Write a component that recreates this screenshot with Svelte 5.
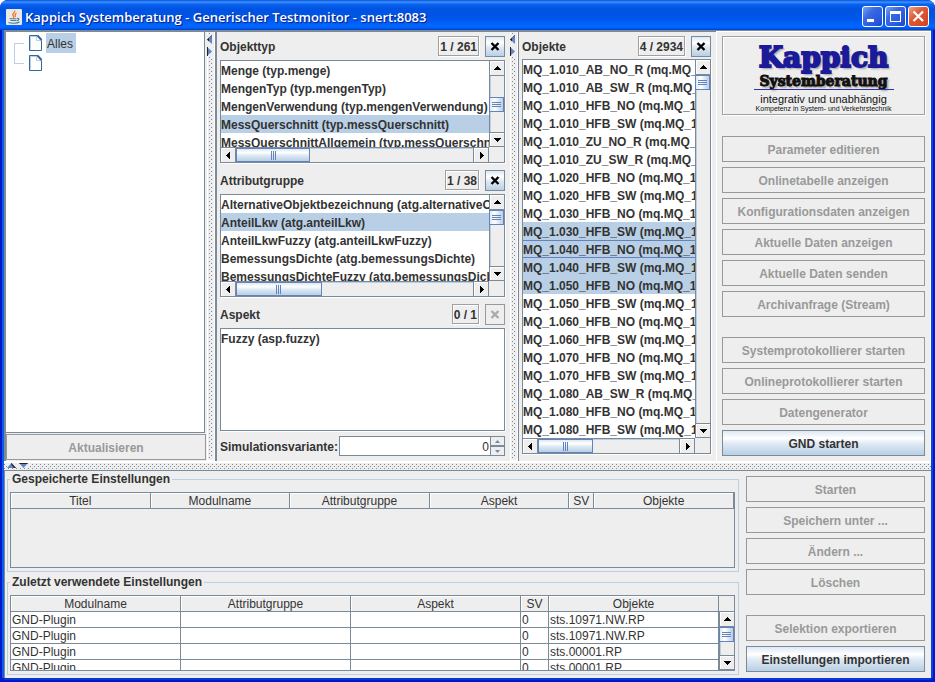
<script>
  const types = [
    'Menge (typ.menge)',
    'MengenTyp (typ.mengenTyp)',
    'MengenVerwendung (typ.mengenVerwendung)',
    'MessQuerschnitt (typ.messQuerschnitt)',
    'MessQuerschnittAllgemein (typ.messQuerschn'
  ];
  const groups = [
    'AlternativeObjektbezeichnung (atg.alternativeO',
    'AnteilLkw (atg.anteilLkw)',
    'AnteilLkwFuzzy (atg.anteilLkwFuzzy)',
    'BemessungsDichte (atg.bemessungsDichte)',
    'BemessungsDichteFuzzy (atg.bemessungsDich'
  ];
  const objects = [
    '1.010_AB_NO_R (mq.MQ_', '1.010_AB_SW_R (mq.MQ_', '1.010_HFB_NO (mq.MQ_1', '1.010_HFB_SW (mq.MQ_1',
    '1.010_ZU_NO_R (mq.MQ_', '1.010_ZU_SW_R (mq.MQ_', '1.020_HFB_NO (mq.MQ_1', '1.020_HFB_SW (mq.MQ_1',
    '1.030_HFB_NO (mq.MQ_1', '1.030_HFB_SW (mq.MQ_1', '1.040_HFB_NO (mq.MQ_1', '1.040_HFB_SW (mq.MQ_1',
    '1.050_HFB_NO (mq.MQ_1', '1.050_HFB_SW (mq.MQ_1', '1.060_HFB_NO (mq.MQ_1', '1.060_HFB_SW (mq.MQ_1',
    '1.070_HFB_NO (mq.MQ_1', '1.070_HFB_SW (mq.MQ_1', '1.080_AB_SW_R (mq.MQ_', '1.080_HFB_NO (mq.MQ_1',
    '1.080_HFB_SW (mq.MQ_1'
  ].map((n) => `MQ_${n}`);

  const tools = [
    'Parameter editieren', 'Onlinetabelle anzeigen', 'Konfigurationsdaten anzeigen',
    'Aktuelle Daten anzeigen', 'Aktuelle Daten senden', 'Archivanfrage (Stream)'
  ];
  const services = ['Systemprotokollierer starten', 'Onlineprotokollierer starten', 'Datengenerator'];
  const presetActions = ['Starten', 'Speichern unter ...', 'Ändern ...', 'Löschen'];
  const savedColumns = ['Titel', 'Modulname', 'Attributgruppe', 'Aspekt', 'SV', 'Objekte'];
  const recentColumns = savedColumns.slice(1);
  const recent = ['sts.10971.NW.RP', 'sts.10971.NW.RP', 'sts.00001.RP', 'sts.00001.RP'];

  let variant = $state('0');
  const step = (n) => (variant = String(Math.max(0, Number(variant) + n)));
</script>

{#snippet page()}
  <svg class="page" width="14" height="17" viewBox="0 0 14 17" aria-hidden="true">
    <path d="M.5.5H8.5L12.5 5V15.5H.5Z" fill="#fff" stroke="#336699" />
    <path d="M1.5 14.5V1.5H7.5" fill="none" stroke="#b8cfe5" />
    <path d="M7.5 1V5.5H12.5" fill="none" stroke="#b8cfe5" />
    <path d="M8.5.5L12.5 5" stroke="#336699" stroke-width="2" />
  </svg>
{/snippet}

{#snippet arrow(dir)}
  <svg width="9" height="9" viewBox="0 0 9 9" aria-hidden="true" shape-rendering="crispEdges">
    {#if dir === 'up'}<path d="M4 2h1v1h1v1h1v1h1v1H1V5h1V4h1V3h1z" />
    {:else if dir === 'down'}<path d="M1 3h7v1H7v1H6v1H5v1H4V6H3V5H2V4H1z" />
    {:else if dir === 'left'}<path d="M6 1v7H5V7H4V6H3V5H2V4h1V3h1V2h1V1z" />
    {:else}<path d="M3 1v7h1V7h1V6h1V5h1V4H6V3H5V2H4V1z" />{/if}
  </svg>
{/snippet}

{#snippet bar(axis, before, size, after)}
  <div class="bar {axis}">
    <button class="step" aria-label="Zurück">{@render arrow(axis === 'v' ? 'up' : 'left')}</button>
    <div class="track">
      <span style="flex-grow:{before}"></span>
      <span class="thumb" style="flex-grow:{size}"><i></i></span>
      <span style="flex-grow:{after}"></span>
    </div>
    <button class="step" aria-label="Weiter">{@render arrow(axis === 'v' ? 'down' : 'right')}</button>
  </div>
{/snippet}

{#snippet head(title, count, active)}
  <header class="head">
    <h2>{title}</h2>
    <output>{count}</output>
    <button class="clear" aria-label="Auswahl {title} aufheben" disabled={!active}>
      <svg width="10" height="9" viewBox="0 0 10 9" aria-hidden="true"><path d="M1.5 1L8.5 8M8.5 1L1.5 8" stroke="currentColor" stroke-width="2.4" /></svg>
    </button>
  </header>
{/snippet}

{#snippet options(label, items, from, to, focus)}
  <div class="options" role="listbox" tabindex="0" aria-label={label}>
    {#each items as item, i}
      <div class="option" class:focus={i === focus} role="option" tabindex="-1" aria-selected={i >= from && i <= to}>{item}</div>
    {/each}
  </div>
{/snippet}

{#snippet splitter()}
  <div class="splitter">
    <svg width="5" height="21" viewBox="0 0 5 21" aria-hidden="true">
      <path d="M5 0V9L0 4.500Z" fill="#6382bf" /><path d="M5 0L0 4.500L2 6.500V3L5 .8Z" fill="#222" />
      <path d="M0 12V21L5 16.500Z" fill="#6382bf" /><path d="M0 12h1v9H0z" fill="#222" />
    </svg>
  </div>
{/snippet}

{#snippet columns(names)}
  <thead><tr>{#each names as name}<th scope="col" class:sv={name === 'SV'}>{name}</th>{/each}</tr></thead>
{/snippet}

<div class="window">
  <div class="titlebar">
    <svg width="16" height="16" viewBox="0 0 16 16" aria-hidden="true">
      <rect width="16" height="16" rx="1" fill="#e9e9e6" />
      <path d="M8.500 1.500C10 3.500 5.500 4.500 7 6.500S8 8 7.500 8.800M10.500 4C8.500 5 9.500 6 9.200 7.800" fill="none" stroke="#e8772e" stroke-width="1.300" />
      <path d="M3.500 9.700H10.500M4.500 11.500H10M11 9.500C13.500 8.500 13.500 11.500 10.500 11.700M2.500 13.500C5 14.600 11 14.600 13.500 13" fill="none" stroke="#4e7896" stroke-width="1.100" />
    </svg>
    <h1>Kappich Systemberatung - Generischer Testmonitor - snert:8083</h1>
    <button class="sys" aria-label="Minimieren"><svg width="19" height="19" viewBox="0 0 19 19"><path d="M4 12h7v3H4z" fill="#fff" /></svg></button>
    <button class="sys" aria-label="Maximieren"><svg width="19" height="19" viewBox="0 0 19 19"><path d="M4 4h11v11H4zM5 7v7h9V7z" fill="#fff" fill-rule="evenodd" /></svg></button>
    <button class="sys close" aria-label="Schließen"><svg width="19" height="19" viewBox="0 0 19 19"><path d="M4.500 4.500L14 14M14 4.500L4.500 14" stroke="#fff" stroke-width="2.200" /></svg></button>
  </div>

  <main>
    <div class="upper">
      <section class="left">
        <div class="tree">
          <span class="branch"></span>
          <ul>
            <li>{@render page()}<span class="node">Alles</span></li>
            <li>{@render page()}</li>
          </ul>
        </div>
        <button class="btn" disabled>Aktualisieren</button>
      </section>

      {@render splitter()}

      <section class="filters">
        {@render head('Objekttyp', '1 / 261', true)}
        <div class="pane">
          {@render options('Objekttyp', types, 3, 3, -1)}
          {@render bar('v', 20, 0, 20)}
          {@render bar('h', 0, 73, 165)}
        </div>
        {@render head('Attributgruppe', '1 / 38', true)}
        <div class="pane">
          {@render options('Attributgruppe', groups, 1, 1, -1)}
          {@render bar('v', 0, 0, 1)}
          {@render bar('h', 0, 85, 153)}
        </div>
        {@render head('Aspekt', '0 / 1', false)}
        <div class="pane plain">
          {@render options('Aspekt', ['Fuzzy (asp.fuzzy)'], -1, -1, -1)}
        </div>
        <div class="variant">
          <label for="variant">Simulationsvariante:</label>
          <input id="variant" type="text" inputmode="numeric" bind:value={variant} />
          <div class="spin">
            <button aria-label="Erhöhen" onclick={() => step(1)}><svg width="5" height="3" viewBox="0 0 5 3"><path d="M2.500 0L5 3H0z" /></svg></button>
            <button aria-label="Verringern" onclick={() => step(-1)}><svg width="5" height="3" viewBox="0 0 5 3"><path d="M2.500 3L5 0H0z" /></svg></button>
          </div>
        </div>
      </section>

      {@render splitter()}

      <section class="objects">
        {@render head('Objekte', '4 / 2934', true)}
        <div class="pane">
          {@render options('Objekte', objects, 9, 12, 10)}
          {@render bar('v', 0, 0, 1)}
          {@render bar('h', 0, 54, 88)}
        </div>
      </section>

      <aside>
        <div class="logo">
          <strong>Kappich</strong>
          <b>Systemberatung</b>
          <hr />
          <span>integrativ und unabhängig</span>
          <small>Kompetenz in System- und Verkehrstechnik</small>
        </div>
        <div class="stack">
          {#each tools as name}<button class="btn" disabled>{name}</button>{/each}
        </div>
        <div class="stack">
          {#each services as name}<button class="btn" disabled>{name}</button>{/each}
          <button class="btn">GND starten</button>
        </div>
      </aside>
    </div>

    <div class="divider">
      <svg width="22" height="5" viewBox="0 0 22 5" aria-hidden="true">
        <path d="M4.500 0L9 5H0Z" fill="#6382bf" /><path d="M4.500 0L9 5H7L4 1Z" fill="#222" />
        <path d="M12 0H21L16.500 5Z" fill="#6382bf" /><path d="M12 0H21L20 1H13Z" fill="#222" />
      </svg>
    </div>

    <div class="lower">
      <div class="presets">
        <fieldset>
          <legend>Gespeicherte Einstellungen</legend>
          <div class="grid">
            <table class="saved">{@render columns(savedColumns)}</table>
          </div>
        </fieldset>
        <fieldset>
          <legend>Zuletzt verwendete Einstellungen</legend>
          <div class="grid">
            <table>
              {@render columns(recentColumns)}
              <tbody>
                {#each recent as name}
                  <tr><td>GND-Plugin</td><td></td><td></td><td>0</td><td>{name}</td></tr>
                {/each}
              </tbody>
            </table>
            <div class="side">
              {@render bar('v', 0, 0, 1)}
            </div>
          </div>
        </fieldset>
      </div>
      <div class="actions">
        <div class="stack">
          {#each presetActions as name}<button class="btn" disabled>{name}</button>{/each}
        </div>
        <div class="stack">
          <button class="btn" disabled>Selektion exportieren</button>
          <button class="btn">Einstellungen importieren</button>
        </div>
      </div>
    </div>
  </main>
</div>

<style>
  :global(body) { background: #fff; }
  * { box-sizing: border-box; }
  h1, h2, ul, fieldset, legend, hr { margin: 0; padding: 0; font: inherit; }
  button, input { font: inherit; color: inherit; padding: 0; margin: 0; border-radius: 0; }
  svg { display: block; flex: none; }

  .window {
    --line: #7a8a99;
    --light: #b8cfe5;
    --blue: #6382bf;
    --face: linear-gradient(#dde8f3 0%, #fff 30%, #dde8f3 55%, #b8cfe5 100%);
    display: flex;
    flex-direction: column;
    height: 100vh;
    min-height: 560px;
    font: bold 12px/18px "Liberation Sans", Arial, sans-serif;
    color: #333;
    border-radius: 8px 8px 0 0;
    overflow: hidden;
    background: #0019cf;
  }
  .titlebar {
    display: flex;
    align-items: center;
    gap: 2px;
    height: 30px;
    flex: none;
    padding: 3px 6px 0 6px;
    background: linear-gradient(#0a4fd8 0%, #3b92ff 7%, #0a62f0 14%, #0053e1 30%, #0055e8 60%, #0066ff 85%, #0062fb 92%, #0040c8 100%);
  }
  h1 {
    flex: 1;
    min-width: 0;
    white-space: nowrap;
    overflow: hidden;
    padding-left: 1px;
    font: 600 13px/18px "Open Sans", "Noto Sans", sans-serif;
    color: #fff;
    text-shadow: 1px 1px 1px #0a1883;
    -webkit-text-stroke: 0;
  }
  .sys {
    width: 21px;
    height: 21px;
    border: 1px solid #fff;
    border-radius: 3px;
    background: linear-gradient(135deg, #7ea2f4, #3a69e3 35%, #2a5be0 70%, #1a48c4);
  }
  .close { background: linear-gradient(135deg, #f0a08a, #e05a35 40%, #d1421c); }

  main {
    flex: 1;
    min-height: 0;
    display: flex;
    flex-direction: column;
    background: #eee;
    margin: 0 4px 4px;
    box-shadow: -2px 0 0 #0c5ce4, 2px 0 0 #0a45d8, 0 2px 0 #0838d0;
  }
  .upper {
    flex: 1;
    min-height: 0;
    display: grid;
    grid-template-columns: minmax(0, 201fr) 8px minmax(0, 295fr) 8px minmax(0, 198fr) 215px;
    grid-template-rows: minmax(0, 1fr);
    border-top: 2px solid var(--line);
    border-left: 2px solid var(--line);
  }
  .left { display: flex; flex-direction: column; gap: 1px; padding: 0 1px 1px 0; }
  .tree {
    flex: 1;
    min-height: 0;
    display: flex;
    margin-right: 1px;
    padding: 1px 0 0 8px;
    background: #fff;
    border-right: 1px solid var(--line);
    border-bottom: 1px solid var(--line);
    font-weight: normal;
  }
  .branch { width: 10px; height: 21px; margin: 10px 5px 0 0; border: 1px solid var(--light); border-right: 0; }
  ul { list-style: none; }
  li { display: flex; align-items: center; gap: 3px; height: 20px; }
  .node { padding: 2px 3px 0 1px; background: var(--light); }

  .btn {
    display: block;
    width: 100%;
    height: 26px;
    flex: none;
    padding-top: 2px;
    border: 1px solid var(--line);
    background: var(--face);
    white-space: nowrap;
  }
  .btn:disabled { border-color: #999; background: none; color: #999; }
  .stack { display: flex; flex-direction: column; gap: 5px; }
  .stack + .stack { margin-top: 20px; }

  .splitter, .divider {
    position: relative;
    border: solid #fff;
    background:
      conic-gradient(from 270deg at 1px 1px, var(--line) 25%, transparent 0) 0 0 / 4px 4px,
      conic-gradient(from 270deg at 1px 1px, var(--line) 25%, transparent 0) 2px 2px / 4px 4px,
      #eee;
    background-origin: content-box;
    background-clip: content-box;
  }
  .splitter { padding: 1px; border-width: 0 1px 1px; }
  .splitter svg { position: absolute; left: -1px; top: 3px; background: #eee; }
  .divider { flex: none; height: 10px; padding: 1px 0; border-width: 2px 0 0; border-bottom: 1px solid var(--line); }
  .divider svg { position: absolute; left: 3px; top: 0; background: #eee; }

  .filters { display: flex; flex-direction: column; padding: 4px 5px 5px 3px; border-left: 2px solid var(--line); }
  .objects { display: flex; flex-direction: column; padding: 4px 5px 7px 3px; border-left: 1px solid var(--line); }
  .head { display: flex; align-items: flex-start; gap: 6px; height: 21px; margin-bottom: 3px; flex: none; }
  .objects .head { margin-bottom: 2px; }
  h2 { flex: 1; line-height: 22px; }
  output {
    height: 20px;
    line-height: 18px;
    padding: 1px 1px 0;
    border: 1px solid #a0a0a0;
    box-shadow: 1px 1px 0 #fff, inset 1px 1px 0 #fff;
    white-space: nowrap;
  }
  .clear {
    display: grid;
    place-items: center;
    width: 20px;
    height: 21px;
    border: 1px solid var(--line);
    background: var(--face);
    color: #000;
  }
  .clear:disabled { border-color: #999; background: none; color: #aaa; }

  .pane {
    flex: 1;
    min-height: 0;
    display: grid;
    grid-template: minmax(0, 1fr) 15px / minmax(0, 1fr) 15px;
    border: 1px solid var(--line);
    box-shadow: 1px 1px 0 #fff;
  }
  .pane.plain { grid-template: minmax(0, 1fr) / minmax(0, 1fr); }
  .filters .pane { margin-bottom: 7px; }
  .filters .plain { margin-bottom: 5px; }
  .options { overflow: hidden; background: #fff; outline: 0; }
  .option { height: 18px; overflow: hidden; white-space: nowrap; border: solid transparent; border-width: 1px 0; line-height: 18px; }
  .option[aria-selected='true'] { background: var(--light); }
  .option.focus { border-color: var(--blue); }

  .bar { display: flex; background: #eee; }
  .bar.v { flex-direction: column; border-left: 1px solid var(--line); }
  .bar.h { border-top: 1px solid var(--line); border-right: 1px solid var(--line); }
  .step { display: grid; place-items: center; flex: 0 0 15px; border: 0; background: #eee; box-shadow: inset 1px 1px 0 #fff; }
  .v .step:last-child { border-top: 1px solid var(--line); border-bottom: 1px solid var(--line); }
  .h .step:last-child { border-left: 1px solid var(--line); }
  .v .step:first-child { border-bottom: 1px solid var(--line); }
  .h .step:first-child { border-right: 1px solid var(--line); }
  .track { flex: 1; min-width: 0; min-height: 0; display: flex; }
  .track span { flex-basis: 0; }
  .v .track { flex-direction: column; box-shadow: inset 1px 0 0 var(--light); }
  .h .track { box-shadow: inset 0 1px 0 var(--light); }
  .track .thumb { display: grid; place-items: center; border: 1px solid var(--blue); background: var(--face); }
  .v .thumb { flex-basis: 15px; margin-left: -1px; background: linear-gradient(90deg, #dde8f3, #fff 35%, #b8cfe5); }
  .thumb i { width: 9px; height: 5px; background: repeating-linear-gradient(var(--blue) 0 1px, transparent 1px 2px); }
  .h .thumb i { width: 5px; height: 9px; background: repeating-linear-gradient(90deg, var(--blue) 0 1px, transparent 1px 2px); }

  .variant { display: flex; height: 20px; flex: none; }
  .variant label { line-height: 22px; margin-right: 1px; white-space: nowrap; }
  .variant input {
    flex: 1;
    min-width: 0;
    border: 1px solid var(--line);
    border-right: 0;
    padding: 2px 1px 0 0;
    background: #fff;
    text-align: right;
    font-weight: normal;
    outline: 0;
  }
  .spin { display: flex; flex-direction: column; width: 15px; }
  .spin button { flex: 1; display: grid; place-items: center; border: 1px solid var(--line); background: #eee; fill: var(--line); }

  aside { border: solid #fff; border-width: 1px 1px 0; margin-top: -1px; padding: 4px 5px 4px 5px; }
  .logo {
    display: flex;
    flex-direction: column;
    align-items: center;
    height: 79px;
    margin-bottom: 21px;
    padding-top: 4px;
    border: 1px solid #a0a0a0;
    box-shadow: 1px 1px 0 #fff, inset 1px 1px 0 #fff;
    white-space: nowrap;
    color: #111;
  }
  .logo strong { font: bold 28px/33px "DejaVu Serif", serif; color: #1a1a9a; -webkit-text-stroke: 2px #1a1a9a; text-shadow: 2px 2px 2px #999; }
  .logo b { font: bold 14px/14px "DejaVu Serif", serif; -webkit-text-stroke: 1px #111; text-shadow: 2px 2px 2px #999; }
  .logo hr { width: 140px; height: 1px; margin: 1px 0 3px; border: 0; background: #3333a0; flex: none; }
  .logo span { font: 11px/12px "Liberation Sans", sans-serif; }
  .logo small { font: 7px/8px "Liberation Sans", sans-serif; }

  .lower { flex: none; display: grid; grid-template-columns: minmax(0, 1fr) 179px; gap: 7px; padding: 1px 6px 3px 2px; border-left: 1px solid var(--line); }
  .presets { display: flex; flex-direction: column; gap: 3px; }
  fieldset { min-width: 0; border: 1px solid var(--light); padding: 6px 3px 3px 2px; }
  legend { line-height: 14px; padding: 0 2px; }
  .grid { display: flex; align-items: flex-start; height: 76px; overflow: hidden; border: 1px solid var(--line); }
  table { flex: 1; min-width: 0; width: 100%; table-layout: fixed; border-collapse: separate; border-spacing: 0; font-weight: normal; line-height: 14px; }
  th, td { height: 16px; padding: 0 1px; border: solid var(--line); border-width: 0 1px 1px 0; overflow: hidden; white-space: nowrap; }
  th { font-weight: normal; text-align: center; box-shadow: inset 1px 1px 0 #fff; }
  td { background: #fff; }
  .sv { width: 28px; }
  .saved .sv { width: 25px; }
  .side { align-self: stretch; width: 15px; flex: none; display: flex; padding-top: 15px; }
  .side .bar { flex: 1; border-top: 1px solid var(--line); }
  .actions { padding-top: 4px; }
</style>
